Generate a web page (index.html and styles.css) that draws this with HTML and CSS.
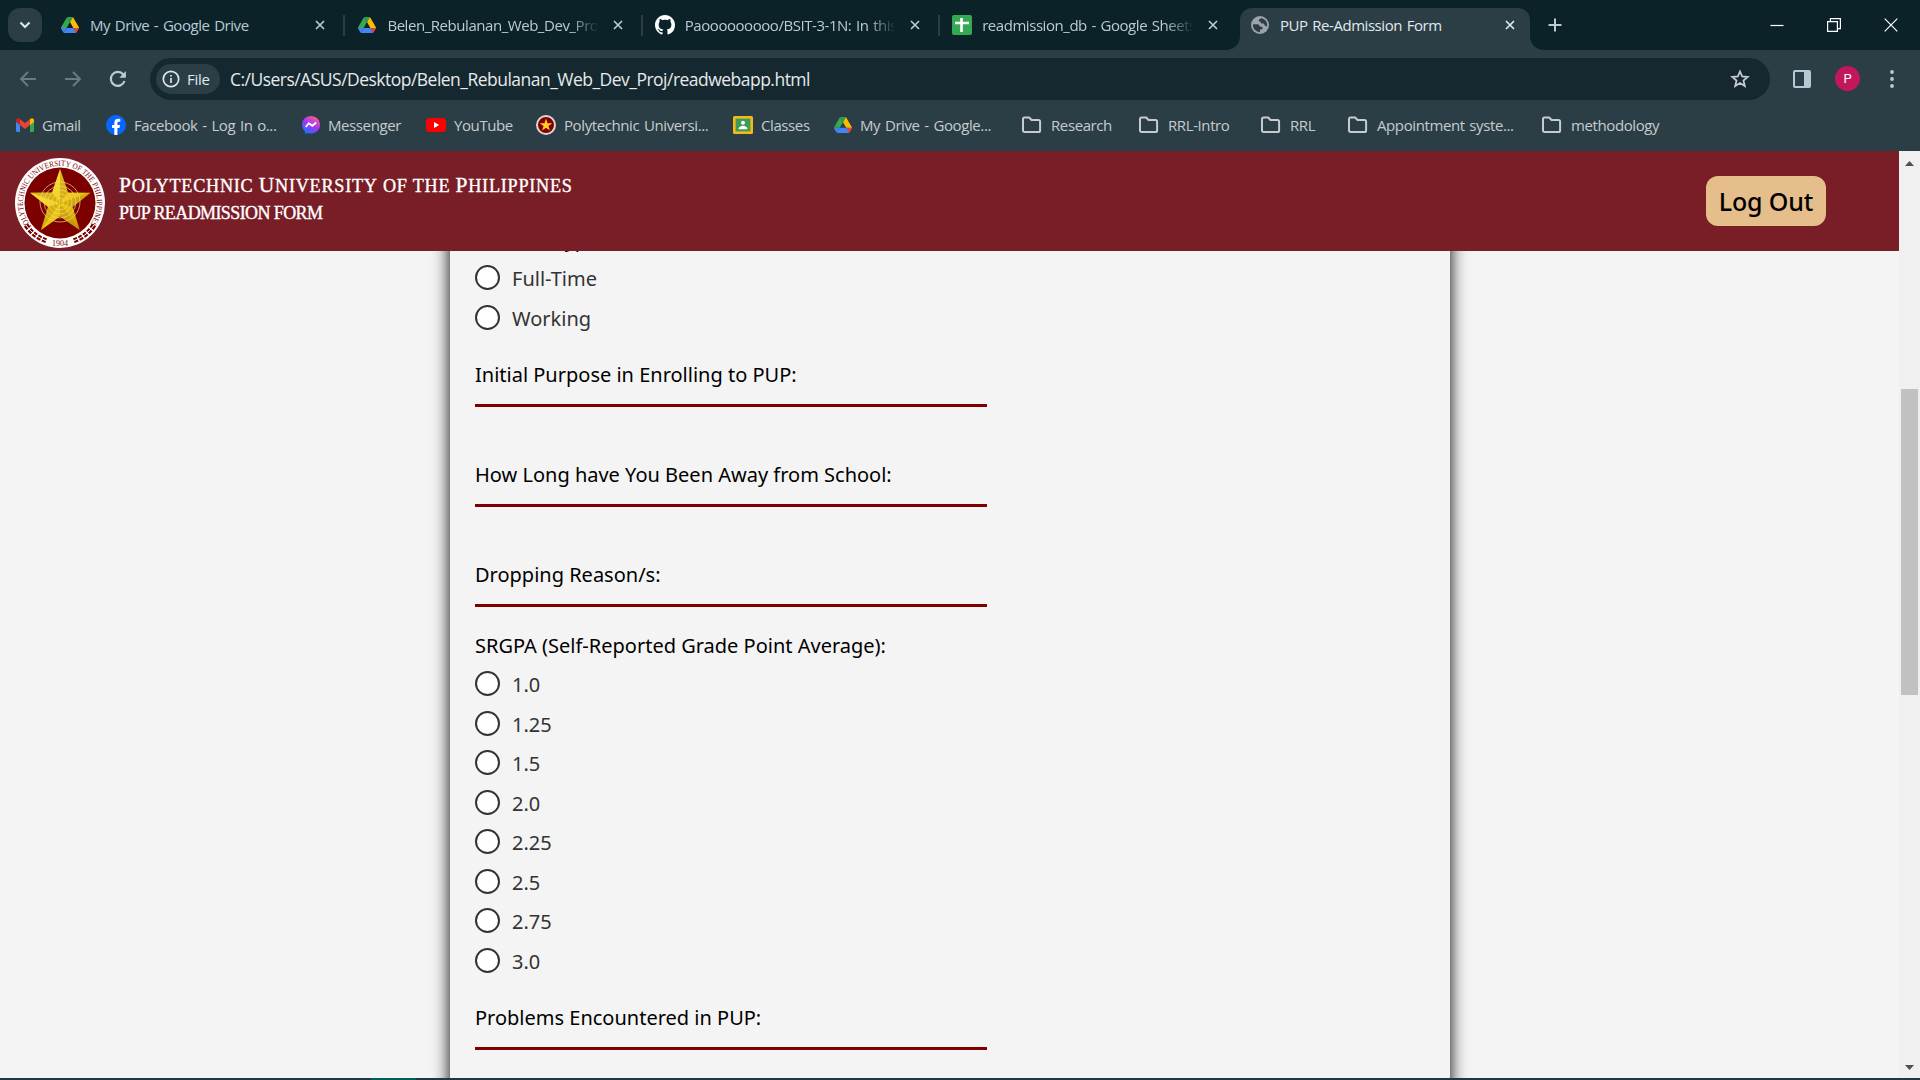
FILE: index.html
```html
<!DOCTYPE html>
<html lang="en">
<head>
<meta charset="utf-8">
<title>PUP Re-Admission Form</title>
<link rel="stylesheet" href="styles.css">
</head>
<body>
<svg class="defs" width="0" height="0" aria-hidden="true">
  <symbol id="drive" viewBox="0 0 87.3 78">
    <path fill="#4285f4" d="m6.6 66.85 3.85 6.65c.8 1.4 1.95 2.5 3.3 3.3l13.75-23.8h-27.5c0 1.55.4 3.1 1.2 4.5z"/>
    <path fill="#34a853" d="m43.65 25-13.75-23.8c-1.35.8-2.5 1.9-3.3 3.3l-25.4 44a9.06 9.06 0 0 0 -1.2 4.5h27.5z"/>
    <path fill="#ea4335" d="m73.55 76.8c1.35-.8 2.5-1.9 3.3-3.3l1.6-2.75 7.65-13.25c.8-1.4 1.2-2.95 1.2-4.5h-27.5l5.85 11.5z"/>
    <path fill="#2f9e4a" d="m43.65 25 13.75-23.8c-1.35-.8-2.9-1.2-4.5-1.2h-18.5c-1.6 0-3.15.45-4.5 1.2z"/>
    <path fill="#4285f4" d="m59.8 53h-32.3l-13.75 23.8c1.35.8 2.9 1.2 4.5 1.2h50.8c1.6 0 3.15-.45 4.5-1.2z"/>
    <path fill="#fbbc04" d="m73.4 26.5-12.7-22c-.8-1.4-1.95-2.5-3.3-3.3l-13.75 23.8 16.15 28h27.45c0-1.55-.4-3.1-1.2-4.5z"/>
  </symbol>
  <symbol id="close" viewBox="0 0 10 10"><path d="M1 1l8 8M9 1l-8 8" fill="none" stroke="currentColor" stroke-width="1.7"/></symbol>
  <symbol id="folder" viewBox="0 0 21 18"><path d="M2 3.2c0-1 .6-1.7 1.6-1.7h4.6l2.3 2.5h7c1 0 1.6.7 1.6 1.6v8.8c0 1-.6 1.6-1.6 1.6H3.6c-1 0-1.6-.6-1.6-1.6z" fill="none" stroke="#c7cbce" stroke-width="2" stroke-linejoin="round"/></symbol>
</svg>

<header class="tabstrip">
  <div class="tab-search"><svg width="12" height="8" viewBox="0 0 12 8"><path d="M1.500 1.500L6 6l4.500-4.500" fill="none" stroke="#dfe4e7" stroke-width="2.100"/></svg></div>
  <div class="tab"><svg class="fav" viewBox="0 0 87.300 78"><use href="#drive"/></svg><span class="tab-title">My Drive - Google Drive</span><svg class="x"><use href="#close"/></svg></div>
  <div class="tab"><svg class="fav" viewBox="0 0 87.300 78"><use href="#drive"/></svg><span class="tab-title fade">Belen_Rebulanan_Web_Dev_Proj</span><svg class="x"><use href="#close"/></svg></div>
  <div class="tab"><svg class="fav big" viewBox="0 0 16 16"><path fill="#fff" d="M8 0C3.580 0 0 3.580 0 8c0 3.540 2.290 6.530 5.470 7.590.4.070.55-.17.55-.38 0-.19-.010-.82-.010-1.490-2.010.37-2.530-.49-2.690-.94-.090-.23-.48-.94-.82-1.130-.28-.15-.68-.52-.010-.53.63-.010 1.080.58 1.230.82.72 1.210 1.870.87 2.330.66.070-.52.28-.87.510-1.070-1.780-.2-3.640-.89-3.640-3.950 0-.87.310-1.590.82-2.150-.080-.2-.36-1.020.080-2.120 0 0 .67-.21 2.200.82.64-.18 1.320-.27 2-.27s1.360.090 2 .27c1.530-1.040 2.200-.82 2.200-.82.44 1.100.16 1.920.080 2.120.510.56.82 1.270.82 2.150 0 3.070-1.870 3.750-3.650 3.950.29.25.54.73.54 1.480 0 1.070-.010 1.930-.010 2.200 0 .21.150.46.550.38A8.010 8.010 0 0 0 16 8c0-4.420-3.580-8-8-8z"/></svg><span class="tab-title fade">Paooooooooo/BSIT-3-1N: In this</span><svg class="x"><use href="#close"/></svg></div>
  <div class="tab"><svg class="fav big" viewBox="0 0 20 20"><rect width="20" height="20" rx="2" fill="#34a853"/><path d="M3 8h14M9.500 3v14" stroke="#fff" stroke-width="2.600"/></svg><span class="tab-title fade">readmission_db - Google Sheets</span><svg class="x"><use href="#close"/></svg></div>
  <div class="tab active"><svg class="fav" viewBox="0 0 18 18"><circle cx="9" cy="9" r="9" fill="#9da3aa"/><path fill="#2b3e46" d="M10.500 2.200c-1.200 0-2.700 1-2.700 2.400 0 .8.500 1 1.300 1 .7 0 .6.500.6 1 0 .7.500 1 1.200 1h1.600c.9 0 1 .9 1 1.500 0 .8.800 1.200 1.600 1.200h1.100A7.200 7.200 0 0 0 10.500 2.200zM1.900 8.200h4.300c1.600 0 2.700 1 2.700 2.600h1.800c1.200 0 1.200 2.700-.3 2.700H9v2.700A7.200 7.200 0 0 1 1.900 8.200z"/></svg><span class="tab-title">PUP Re-Admission Form</span><svg class="x"><use href="#close"/></svg></div>
  <svg class="new-tab" width="14" height="14" viewBox="0 0 14 14"><path d="M7 .5v13M.5 7h13" stroke="#b9cbd6" stroke-width="2"/></svg>
  <div class="window-buttons">
    <svg width="14" height="14" viewBox="0 0 14 14"><path d="M.5 7.500h13" stroke="#fff" stroke-width="1.200"/></svg>
    <svg width="14" height="14" viewBox="0 0 14 14"><path d="M.6 3.600h9.800v9.800H.6zM3.400 3.600V.6h10v10h-3" fill="none" stroke="#fff" stroke-width="1.200"/></svg>
    <svg width="14" height="14" viewBox="0 0 14 14"><path d="M.7.7l12.600 12.600M13.300.7L.7 13.300" stroke="#fff" stroke-width="1.200"/></svg>
  </div>
</header>

<section class="toolbar">
  <nav class="nav">
    <svg width="18" height="18" viewBox="0 0 18 18"><path d="M17 9H2.500M9 2L2 9l7 7" fill="none" stroke="#6c7b83" stroke-width="1.900"/></svg>
    <svg width="18" height="18" viewBox="0 0 18 18"><path d="M1 9h14.500M9 2l7 7-7 7" fill="none" stroke="#6c7b83" stroke-width="1.900"/></svg>
    <svg width="18" height="18" viewBox="0 0 18 18"><path d="M15.500 11A7 7 0 1 1 14.300 4.500L16 6.400" fill="none" stroke="#b9cbd6" stroke-width="2.200"/><path d="M16.900 1v6.800h-6.600z" fill="#b9cbd6"/></svg>
  </nav>
  <div class="omnibox">
    <div class="chip"><svg width="18" height="18" viewBox="0 0 18 18"><circle cx="9" cy="9" r="7.700" fill="none" stroke="#dfe4e7" stroke-width="1.700"/><path d="M9 8v5M9 4.900v1.700" stroke="#dfe4e7" stroke-width="1.700"/></svg><span>File</span></div>
    <span class="url">C:/Users/ASUS/Desktop/Belen_Rebulanan_Web_Dev_Proj/readwebapp.html</span>
    <svg class="star" width="20" height="20" viewBox="0 0 20 20"><path d="M10 2.500l2.200 5 5.500.5-4.200 3.600 1.300 5.400-4.800-2.900L5.200 17l1.300-5.400L2.300 8l5.500-.5z" fill="none" stroke="#c7cbce" stroke-width="1.800"/></svg>
  </div>
  <svg class="panel-icon" width="18" height="18" viewBox="0 0 18 18"><rect x="1" y="1" width="16" height="16" rx="1" fill="none" stroke="#b4c8d5" stroke-width="2"/><path d="M11 1h6v16h-6z" fill="#b4c8d5"/></svg>
  <div class="avatar">P</div>
  <svg class="dots" width="4" height="18" viewBox="0 0 4 18"><g fill="#b9cbd6"><circle cx="2" cy="2" r="1.900"/><circle cx="2" cy="9" r="1.900"/><circle cx="2" cy="16" r="1.900"/></g></svg>
</section>

<nav class="bookmarks">
  <a class="bm"><svg width="18" height="14" viewBox="0 0 18 14"><path fill="#4285f4" d="M0 3l4 3v8H1.200C.5 14 0 13.500 0 12.800z"/><path fill="#34a853" d="M14 6l4-3v9.800c0 .7-.5 1.200-1.200 1.200H14z"/><path fill="#fbbc04" d="M14 1.200C15.500-.3 18 .3 18 2.500V4l-4 3z"/><path fill="#c5221f" d="M4 1.200C2.500-.3 0 .3 0 2.500V4l4 3z"/><path fill="#ea4335" d="M4 1.200l5 3.900 5-3.900V7l-5 3.900L4 7z"/></svg><span>Gmail</span></a>
  <a class="bm"><svg width="20" height="20" viewBox="0 0 20 20"><circle cx="10" cy="10" r="10" fill="#0866ff"/><path fill="#fff" d="M8.300 20v-7H6v-3h2.300V8.200c0-3 1.500-4.400 4-4.400.7 0 1.500.1 2 .2v2.700H13c-1.200 0-1.600.6-1.600 1.700V10H14l-.5 3h-2.100v7z"/></svg><span>Facebook - Log In o...</span></a>
  <a class="bm"><svg width="18" height="18" viewBox="0 0 18 18"><defs><linearGradient id="msg" x1=".2" y1="1" x2=".75" y2="0"><stop offset="0" stop-color="#0a7cff"/><stop offset=".5" stop-color="#a033ff"/><stop offset="1" stop-color="#ff5c87"/></linearGradient></defs><path fill="url(#msg)" d="M9 0C3.900 0 0 3.700 0 8.700c0 2.600 1.100 4.900 2.900 6.500l.1 2.800 2.900-1.100c1 .3 2 .5 3.100.5 5.100 0 9-3.700 9-8.700S14.100 0 9 0z"/><path d="M3.800 11l3-3.800 3.600 2.600 3.800-3.300" fill="none" stroke="#fff" stroke-width="1.900"/></svg><span>Messenger</span></a>
  <a class="bm"><svg width="20" height="14" viewBox="0 0 20 14"><rect width="20" height="14" rx="3.500" fill="#f00"/><path fill="#fff" d="M8 4l5.200 3L8 10z"/></svg><span>YouTube</span></a>
  <a class="bm"><svg width="20" height="20" viewBox="0 0 20 20"><circle cx="10" cy="10" r="9" fill="#800000" stroke="#e3d5d3" stroke-width="2"/><path fill="#ffd21f" d="M10 3.600l1.500 4.600h4.800l-3.900 2.800 1.500 4.600-3.900-2.900-3.900 2.900L7.600 11 3.700 8.200h4.800z"/></svg><span>Polytechnic Universi...</span></a>
  <a class="bm"><svg width="20" height="18" viewBox="0 0 20 18"><rect width="20" height="18" rx="1.500" fill="#f4b916"/><path fill="#3c9b56" d="M2.600 2.600h14.800v12.800H2.600z"/><circle cx="10" cy="6.700" r="2" fill="#fff"/><path fill="#fff" d="M5.500 13.300c0-4.700 9-4.700 9 0z"/></svg><span>Classes</span></a>
  <a class="bm"><svg width="18" height="16" viewBox="0 0 87.300 78"><use href="#drive"/></svg><span>My Drive - Google...</span></a>
  <a class="bm folder"><svg width="21" height="18"><use href="#folder"/></svg><span>Research</span></a>
  <a class="bm folder"><svg width="21" height="18"><use href="#folder"/></svg><span>RRL-Intro</span></a>
  <a class="bm folder"><svg width="21" height="18"><use href="#folder"/></svg><span>RRL</span></a>
  <a class="bm folder"><svg width="21" height="18"><use href="#folder"/></svg><span>Appointment syste...</span></a>
  <a class="bm folder"><svg width="21" height="18"><use href="#folder"/></svg><span>methodology</span></a>
</nav>

<div class="viewport">
  <div class="page">
    <header class="banner">
      <svg class="seal" width="90" height="90" viewBox="0 0 90 90">
        <defs>
          <path id="ring" d="M16.500 68.500A37 37 0 1 1 73.500 68.500"/>
          <linearGradient id="gold" x1="0" y1="0" x2="1" y2="1"><stop offset="0" stop-color="#fff04a"/><stop offset=".55" stop-color="#f0cb12"/><stop offset="1" stop-color="#b98a00"/></linearGradient>
        </defs>
        <circle cx="45" cy="45" r="45" fill="#fff"/>
        <circle cx="45" cy="45" r="35.500" fill="#7d0000"/>
        <path fill="url(#gold)" d="M45 11l8 23.500 22.500.2L57.700 49l7 23L45 58.500 26 72l7-23L15 34.700l22-.2z"/>
        <path fill="#b88900" opacity=".45" d="M45 11l8 23.500L45 45zM75.500 34.700L57.700 49 45 45zM64.700 72L45 58.500V45zM26 72l7-23 12-4zM15 34.700l22-.2 8 10.500z"/>
        <g fill="none" stroke="#ead68a" stroke-width=".9" opacity=".8"><circle cx="45" cy="44" r="4"/><circle cx="45" cy="44" r="8"/><circle cx="45" cy="44" r="12"/><circle cx="45" cy="44" r="16"/><circle cx="45" cy="44" r="20"/></g>
        <text class="ring-text"><textPath href="#ring" textLength="164" lengthAdjust="spacingAndGlyphs">POLYTECHNIC UNIVERSITY OF THE PHILIPPINES</textPath></text>
        <text class="year" x="45" y="88" text-anchor="middle">1904</text>
        <path d="M11 67q8 12 21 16M79 67q-8 12-21 16" fill="none" stroke="#7d0000" stroke-width="5" stroke-dasharray="4 1.500"/>
        <path d="M11 67q8 12 21 16M79 67q-8 12-21 16" fill="none" stroke="#fff" stroke-width="1"/>
      </svg>
      <div class="titles">
        <div class="uni"><span>Polytechnic</span> <span>University</span> of the <span>Philippines</span></div>
        <div class="sub">PUP READMISSION FORM</div>
      </div>
      <button class="logout">Log Out</button>
    </header>
    <main class="content">
      <form class="sheet">
        <div class="label">Student Type:</div>
        <div class="options">
          <label class="option"><i></i><span>Full-Time</span></label>
          <label class="option"><i></i><span>Working</span></label>
        </div>
        <div class="field"><div class="label">Initial Purpose in Enrolling to PUP:</div><div class="line"></div></div>
        <div class="field"><div class="label">How Long have You Been Away from School:</div><div class="line"></div></div>
        <div class="field last"><div class="label">Dropping Reason/s:</div><div class="line"></div></div>
        <div class="label">SRGPA (Self-Reported Grade Point Average):</div>
        <div class="options">
          <label class="option"><i></i><span>1.0</span></label>
          <label class="option"><i></i><span>1.25</span></label>
          <label class="option"><i></i><span>1.5</span></label>
          <label class="option"><i></i><span>2.0</span></label>
          <label class="option"><i></i><span>2.25</span></label>
          <label class="option"><i></i><span>2.5</span></label>
          <label class="option"><i></i><span>2.75</span></label>
          <label class="option"><i></i><span>3.0</span></label>
        </div>
        <div class="field"><div class="label">Problems Encountered in PUP:</div><div class="line"></div></div>
      </form>
    </main>
  </div>
  <div class="scrollbar">
    <svg width="9" height="5" viewBox="0 0 9 5"><path d="M0 5l4.500-5L9 5z" fill="#505050"/></svg>
    <div class="thumb"></div>
    <svg class="down" width="9" height="5" viewBox="0 0 9 5"><path d="M0 0l4.500 5L9 0z" fill="#505050"/></svg>
  </div>
</div>
<footer class="taskbar"><div class="running"></div></footer>
</body>
</html>
```
FILE: styles.css
```css
* { box-sizing: border-box; }
body {
  margin: 0; width: 1920px; height: 1080px; overflow: hidden;
  display: flex; flex-direction: column;
  background: #2b3e46; font-family: "Noto Sans", "Open Sans", sans-serif;
}
.defs { position: absolute; }
svg { display: block; flex: none; }

/* tab strip */
.tabstrip {
  height: 50px; flex: none; display: flex; align-items: center;
  background: #0c2229; padding-left: 8px;
  font: 15px "Open Sans", "Noto Sans", sans-serif; word-spacing: 1.2px; color: #b9cbd6;
}
.tab-search {
  width: 34px; height: 34px; border-radius: 12px; background: #2b3e46;
  display: flex; align-items: center; justify-content: center; margin-right: 6px;
}
.tab {
  width: 297.4px; height: 21px; flex: none; display: flex; align-items: center;
  padding: 0 18px 0 13px; border-right: 2px solid #2b3e46;
}
.fav { width: 18px; height: 18px; margin-right: 11px; }
.fav.big { width: 20px; height: 20px; margin: 0 10px 0 -1px; }
.tab-title { flex: 1; min-width: 0; white-space: nowrap; overflow: hidden; letter-spacing: -.45px; line-height: 21px; }
.fade { -webkit-mask-image: linear-gradient(90deg, #000 183px, transparent 212px); mask-image: linear-gradient(90deg, #000 183px, transparent 212px); }
.x { width: 10px; height: 10px; margin-left: 16px; }
.tab:nth-child(5) { border-color: transparent; }
.tab.active {
  position: relative; width: 290px; height: 42px; align-self: flex-end; margin-left: 2.4px;
  padding: 0 15px 8px 11px; border: 0; border-radius: 12px 12px 0 0;
  background: #2b3e46; color: #e3e8ea;
}
.tab.active::before, .tab.active::after {
  content: ""; position: absolute; bottom: 0; width: 13px; height: 13px;
}
.tab.active::before { left: -13px; background: radial-gradient(circle at 0 0, transparent 12.5px, #2b3e46 13px); }
.tab.active::after { right: -13px; background: radial-gradient(circle at 100% 0, transparent 12.5px, #2b3e46 13px); }
.new-tab { margin-left: 18px; }
.window-buttons { margin-left: auto; padding-right: 22px; display: flex; gap: 43px; }

/* toolbar */
.toolbar { height: 57px; flex: none; display: flex; align-items: center; padding: 0 26px 0 19px; }
.nav { display: flex; gap: 27px; width: 131px; }
.omnibox {
  width: 1620px; height: 42px; border-radius: 21px; background: #15282f;
  display: flex; align-items: center; padding: 0 20px 0 6px;
}
.chip {
  width: 64px; height: 30px; border-radius: 15px; background: #2b3e46; margin-right: 10px;
  display: flex; align-items: center; gap: 7px; padding-left: 6px;
  font: 500 15px "Open Sans", sans-serif; letter-spacing: -.3px; color: #e3e8ea;
}
.url { flex: 1; font: 17.5px "Open Sans", sans-serif; letter-spacing: -.52px; color: #e6eaec; }
.panel-icon { margin-left: 23px; }
.avatar {
  width: 25px; height: 25px; border-radius: 50%; background: #c2185b; color: #fff;
  margin-left: 24px; font: 13px/25px Roboto, sans-serif; text-align: center;
}
.dots { margin-left: auto; }

/* bookmarks */
.bookmarks {
  height: 44px; flex: none; display: grid; align-items: center; padding: 0 0 8px 16px;
  grid-template-columns: 90px 196px 124px 110px 197px 101px 187px 117px 122px 87px 194px 150px;
  font: 15px "Open Sans", sans-serif; letter-spacing: -.4px; word-spacing: 1.2px; color: #c7cbce;
}
.bm { display: flex; align-items: center; gap: 8px; white-space: nowrap; }
.bm span { line-height: 20px; }
.bm.folder { gap: 9px; }

/* page */
.viewport { height: 927px; flex: none; display: flex; }
.page { width: 1899px; background: #f4f4f4; display: flex; flex-direction: column; }
.banner {
  height: 100px; flex: none; background: #791d27; display: flex; align-items: center;
  padding: 0 73px 0 15px; color: #fff;
}
.seal { margin-top: 3px; }
.titles { margin: 0 auto 2px 14px; font-family: "Liberation Serif", serif; -webkit-text-stroke: .35px #fff; }
.uni { font-size: 18.2px; text-transform: uppercase; line-height: 26px; letter-spacing: .74px; white-space: nowrap; }
.uni span { display: inline-block; }
.uni span::first-letter { font-size: 21.5px; }
.sub { font-size: 18px; line-height: 29px; letter-spacing: -.6px; }
.ring-text { font: 8px "Liberation Serif", serif; fill: #7d0000; }
.year { font: 8px "Liberation Serif", serif; fill: #7d0000; }
.logout {
  width: 120px; height: 50px; border: 0; border-radius: 12px; background: #e5be8b; padding: 0;
  font: 500 25px "Noto Sans", sans-serif; letter-spacing: -.15px; color: #000;
}
.content { flex: 1; overflow: hidden; }
.sheet {
  width: 1000px; height: 900px; margin: -25px 0 0 450px; padding: 0 25px;
  box-shadow: 0 0 16px #000; font-size: 20px; color: #000;
}
.label { line-height: 27px; }
.options { margin: 5px 0 24px; }
.option { height: 39.5px; display: flex; align-items: center; color: #333; }
.option i { width: 25px; height: 25px; border: 2px solid #333; border-radius: 50%; background: #fff; }
.option span { line-height: 27px; padding-top: 2px; margin-left: 12px; }
.field { margin-bottom: 54px; }
.field.last { margin-bottom: 25px; }
.line { width: 512px; height: 19px; border-bottom: 3px solid #800000; }

.scrollbar { width: 21px; background: #f0f0f0; display: flex; flex-direction: column; align-items: center; padding: 10px 0 8px; }
.thumb { width: 17px; height: 306px; background: #c1c1c1; margin-top: 223px; }
.down { margin-top: auto; }

.taskbar { height: 2px; flex: none; background: #1f3940; display: flex; padding-left: 371px; }
.running { width: 45px; background: #005f56; }
```
